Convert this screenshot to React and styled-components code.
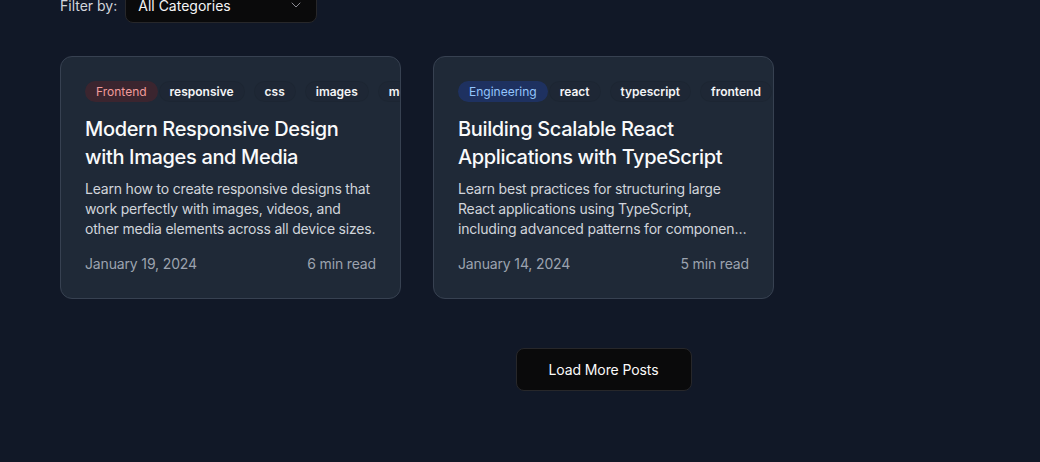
import React from 'react'
import styled, { createGlobalStyle } from 'styled-components'
import { ChevronDown } from 'lucide-react'

const GlobalStyle = createGlobalStyle`
    html, body {
        margin: 0;
        padding: 0;
        background: #111827;
        overflow: hidden;
    }
    body {
        font-family: Inter, "Noto Sans", "Liberation Sans", sans-serif;
        color: #f9fafb;
        -webkit-font-smoothing: antialiased;
    }
`

const Page = styled.div`
    min-height: 462px;
    padding: 0 0 0 60px;
    margin-top: -13px;
`

const Container = styled.div`
    width: 1087px;
`

const FilterRow = styled.div`
    display: flex;
    align-items: center;
    gap: 8px;
    height: 36px;
    margin-bottom: 33px;
`

const FilterLabel = styled.label`
    font-size: 14px;
    color: #d1d5db;
`

const Select = styled.div`
    box-sizing: border-box;
    width: 192px;
    height: 36px;
    display: flex;
    align-items: center;
    justify-content: space-between;
    padding: 0 12px;
    background: #0a0a0b;
    border: 1px solid #27272a;
    border-radius: 8px;
    font-size: 14px;
    color: #f4f4f5;
    svg {
        color: #8b8b93;
    }
`

const Grid = styled.div`
    display: grid;
    grid-template-columns: repeat(3, 341px);
    gap: 32px;
`

const Card = styled.article`
    box-sizing: border-box;
    height: 243px;
    padding: 24px;
    background: #1f2937;
    border: 1px solid #374151;
    border-radius: 12px;
    overflow: hidden;
    display: flex;
    flex-direction: column;
`

const TagRow = styled.div`
    display: flex;
    align-items: center;
    flex-wrap: nowrap;
    height: 22px;
    margin-bottom: 12px;
`

const Category = styled.span`
    flex-shrink: 0;
    height: 21px;
    display: inline-flex;
    align-items: center;
    padding: 0 11px;
    border-radius: 999px;
    font-size: 12px;
    font-weight: 400;
    background: ${props => props.tone === 'red' ? 'rgba(127, 29, 29, 0.3)' : 'rgba(30, 58, 138, 0.5)'};
    color: ${props => props.tone === 'red' ? '#f29b9b' : '#93c5fd'};
`

const TagList = styled.div`
    display: flex;
    gap: 9px;
    margin-left: 1px;
`

const Tag = styled.span`
    flex-shrink: 0;
    height: 21px;
    box-sizing: border-box;
    display: inline-flex;
    align-items: center;
    padding: 0 10px;
    border-radius: 999px;
    font-size: 12px;
    font-weight: 600;
    color: #f3f4f6;
    background: rgba(0, 0, 0, 0.03);
    border: 1px solid rgba(0, 0, 0, 0.06);
`

const Title = styled.h3`
    margin: 0 0 8px;
    font-size: 20px;
    line-height: 28px;
    font-weight: 500;
    letter-spacing: -0.35px;
    color: #f9fafb;
`

const Excerpt = styled.p`
    margin: 0;
    font-size: 14px;
    line-height: 20px;
    letter-spacing: -0.2px;
    color: #d1d5db;
    display: -webkit-box;
    -webkit-line-clamp: 3;
    -webkit-box-orient: vertical;
    overflow: hidden;
`

const Meta = styled.div`
    margin-top: 16px;
    display: flex;
    justify-content: space-between;
    font-size: 14px;
    line-height: 20px;
    letter-spacing: -0.15px;
    color: #9ca3af;
`

const Footer = styled.div`
    display: flex;
    justify-content: center;
    margin-top: 49px;
`

const LoadButton = styled.button`
    box-sizing: border-box;
    width: 176px;
    height: 43px;
    background: #0a0a0b;
    border: 1px solid #27272a;
    border-radius: 8px;
    color: #fafafa;
    font-family: inherit;
    font-size: 14px;
    font-weight: 400;
    letter-spacing: -0.1px;
    cursor: pointer;
`

const posts = [
    {
        category: 'Frontend',
        tone: 'red',
        tags: ['responsive', 'css', 'images', 'media'],
        title: 'Modern Responsive Design with Images and Media',
        excerpt: 'Learn how to create responsive designs that work perfectly with images, videos, and other media elements across all device sizes.',
        date: 'January 19, 2024',
        read: '6 min read'
    },
    {
        category: 'Engineering',
        tone: 'blue',
        tags: ['react', 'typescript', 'frontend', 'architecture'],
        title: 'Building Scalable React Applications with TypeScript',
        excerpt: 'Learn best practices for structuring large React applications using TypeScript, including advanced patterns for component design and state management.',
        date: 'January 14, 2024',
        read: '5 min read'
    }
]

export default function App() {
    return (
        <Page>
            <GlobalStyle />
            <Container>
                <FilterRow>
                    <FilterLabel>Filter by:</FilterLabel>
                    <Select>
                        All Categories
                        <ChevronDown size={16} strokeWidth={1.5} />
                    </Select>
                </FilterRow>
                <Grid>
                    {posts.map(post => (
                        <Card key={post.title}>
                            <TagRow>
                                <Category tone={post.tone}>{post.category}</Category>
                                <TagList>
                                    {post.tags.map(tag => <Tag key={tag}>{tag}</Tag>)}
                                </TagList>
                            </TagRow>
                            <Title>{post.title}</Title>
                            <Excerpt>{post.excerpt}</Excerpt>
                            <Meta>
                                <span>{post.date}</span>
                                <span>{post.read}</span>
                            </Meta>
                        </Card>
                    ))}
                </Grid>
                <Footer>
                    <LoadButton>Load More Posts</LoadButton>
                </Footer>
            </Container>
        </Page>
    )
}
